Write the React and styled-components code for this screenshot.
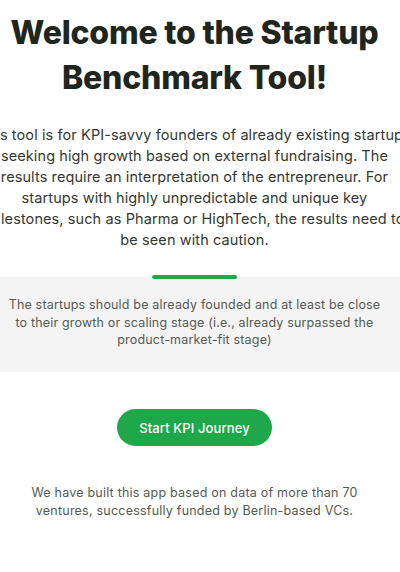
import React from "react";
import styled, { createGlobalStyle } from "styled-components";

const Global = createGlobalStyle`
  html, body { margin: 0; padding: 0; background: #ffffff; }
  body { font-family: "Inter", "Open Sans", sans-serif; }
`;

const Page = styled.div`
  width: 400px;
  min-height: 572px;
  overflow: hidden;
  display: flex;
  flex-direction: column;
  align-items: center;
  padding-right: 11px;
  box-sizing: border-box;
`;

const Title = styled.h1`
  margin: 10px 0 0;
  font-size: 32px;
  line-height: 45px;
  font-weight: 800;
  color: #1f2620;
  text-align: center;
  width: 389px;
  letter-spacing: -0.2px;
`;

const Intro = styled.p`
  margin: 24px 0 0;
  width: 389px;
  display: flex;
  flex-direction: column;
  align-items: center;
  font-size: 14.5px;
  line-height: 21px;
  letter-spacing: 0.1px;
  color: #333833;
`;

const Line = styled.span`
  display: block;
  white-space: nowrap;
`;

const Band = styled.section`
  align-self: stretch;
  margin: 27px -11px 0 0;
  position: relative;
  background: #f4f4f4;
  padding: 19px 11px 0 0;
  height: 95px;
  box-sizing: border-box;
  display: flex;
  justify-content: center;
`;

const Accent = styled.span`
  position: absolute;
  top: -2px;
  left: 152px;
  width: 85px;
  height: 4px;
  border-radius: 2px;
  background: #1fa84a;
`;

const Note = styled.p`
  margin: 0;
  width: 378px;
  font-size: 12.5px;
  line-height: 17.5px;
  letter-spacing: 0.17px;
  color: #555a55;
  text-align: center;
`;

const StartButton = styled.button`
  margin-top: 37px;
  width: 155px;
  height: 37px;
  border: none;
  border-radius: 19px;
  background: #1fa84a;
  color: #ffffff;
  font-family: inherit;
  font-size: 13px;
  font-weight: 500;
  letter-spacing: 0.1px;
  cursor: pointer;
`;

const Footnote = styled.p`
  margin: 38px 0 0;
  width: 340px;
  font-size: 12.5px;
  line-height: 17.5px;
  letter-spacing: 0.22px;
  color: #555a55;
  text-align: center;
`;

const introLines = [
  "This tool is for KPI-savvy founders of already existing startups",
  "seeking high growth based on external fundraising. The",
  "results require an interpretation of the entrepreneur. For",
  "startups with highly unpredictable and unique key",
  "milestones, such as Pharma or HighTech, the results need to",
  "be seen with caution.",
];

export default function App() {
  return (
    <>
      <Global />
      <Page>
        <Title>Welcome to the Startup Benchmark Tool!</Title>
        <Intro>
          {introLines.map((l) => (
            <Line key={l}>{l}</Line>
          ))}
        </Intro>
        <Band>
          <Accent />
          <Note>
            The startups should be already founded and at least be close to
            their growth or scaling stage (i.e., already surpassed the
            product-market-fit stage)
          </Note>
        </Band>
        <StartButton>Start KPI Journey</StartButton>
        <Footnote>
          We have built this app based on data of more than 70 ventures,
          successfully funded by Berlin-based VCs.
        </Footnote>
      </Page>
    </>
  );
}
